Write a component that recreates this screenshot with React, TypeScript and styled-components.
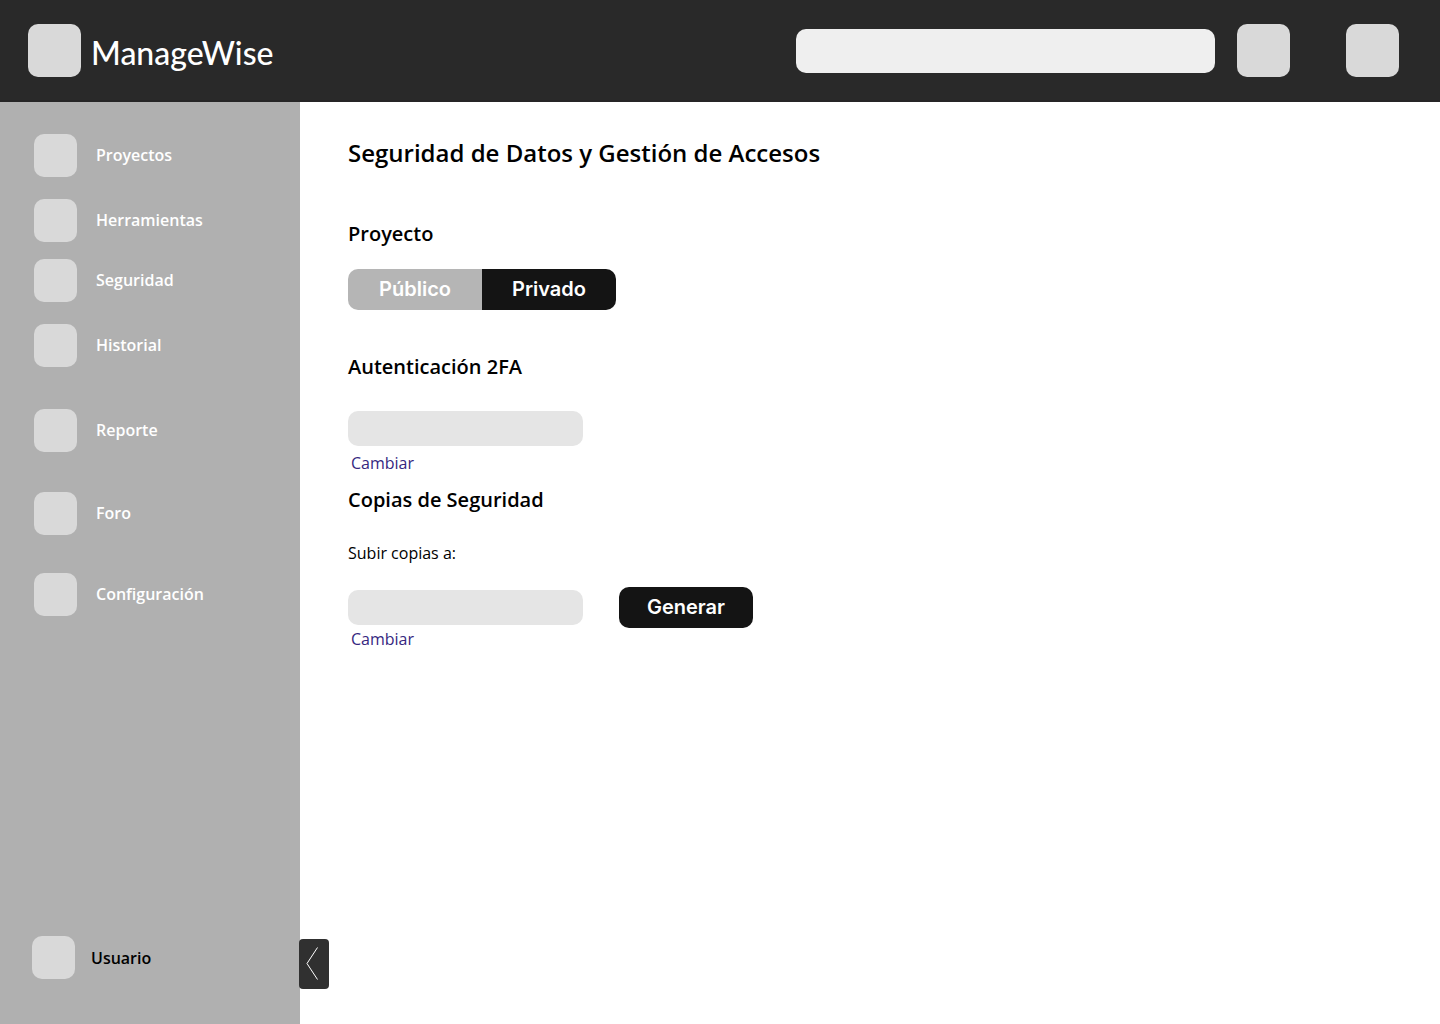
import React from "react";
import styled, { createGlobalStyle } from "styled-components";

const GlobalStyle = createGlobalStyle`
  *, *::before, *::after { box-sizing: border-box; }
  body {
    margin: 0;
    background: #ffffff;
    color: #000000;
    font-family: "Open Sans", "Noto Sans", sans-serif;
    font-size: 16px;
    line-height: 24px;
  }
  button, input { font: inherit; }
`;

const Page = styled.div`
  display: flex;
  flex-direction: column;
  min-height: 100vh;
`;

const Header = styled.header`
  display: flex;
  align-items: center;
  padding: 24px 41px 23px 28px;
  background: #292929;
  border-bottom: 2px solid #262526;
`;

const Tile = styled.span<{ $size: number }>`
  display: block;
  flex: none;
  width: ${(p) => p.$size}px;
  height: ${(p) => p.$size}px;
  border-radius: 10px;
  background: #d9d9d9;
`;

const Brand = styled.a`
  display: flex;
  align-items: center;
  gap: 10px;
  color: #ffffff;
  text-decoration: none;
`;

const BrandName = styled.span`
  padding-top: 4px;
  font-family: Lato, sans-serif;
  font-size: 32px;
  font-weight: 500;
  line-height: 40px;
`;

const Tools = styled.div`
  display: flex;
  flex: 1;
  align-items: center;
  justify-content: flex-end;
`;

const Search = styled.input`
  width: 419px;
  height: 44px;
  margin-right: 22px;
  padding: 0 16px;
  border: 0;
  border-radius: 10px;
  background: #efefef;
`;

const TileButton = styled.button`
  padding: 0;
  border: 0;
  background: none;
  cursor: pointer;

  & + & { margin-left: 56px; }
`;

const Body = styled.div`
  display: flex;
  flex: 1;
`;

const Sidebar = styled.aside`
  position: relative;
  display: flex;
  flex: none;
  flex-direction: column;
  justify-content: space-between;
  width: 300px;
  padding: 32px 32px 45px;
  background: #b0b0b0;
`;

const NavList = styled.ul`
  margin: 0;
  padding: 0 0 0 2px;
  list-style: none;
`;

const NavItem = styled.li<{ $space: number }>`
  margin-top: ${(p) => p.$space}px;
`;

const NavLink = styled.a`
  display: flex;
  align-items: center;
  gap: 19px;
  color: #ffffff;
  font-weight: 600;
  text-decoration: none;
`;

const NavLabel = styled.span`
  padding-bottom: 2px;
`;

const UserLink = styled(NavLink)`
  gap: 16px;
  color: #000000;
`;

const CollapseButton = styled.button`
  position: absolute;
  right: -29px;
  bottom: 35px;
  display: flex;
  align-items: center;
  width: 30px;
  height: 50px;
  padding: 0 7px;
  border: 0;
  border-radius: 4px;
  background: #303030;
  cursor: pointer;
`;

const Main = styled.main`
  flex: 1;
  min-width: 0;
  padding: 35px 48px;
`;

const Title = styled.h1`
  margin: 0 0 51px;
  font-size: 24px;
  font-weight: 600;
  line-height: 32px;
`;

const Section = styled.section<{ $after: number }>`
  margin-bottom: ${(p) => p.$after}px;
`;

const SectionTitle = styled.h2<{ $after: number }>`
  margin: 0 0 ${(p) => p.$after}px;
  font-size: 20px;
  font-weight: 600;
  line-height: 28px;
`;

const Toggle = styled.div`
  display: inline-flex;
  overflow: hidden;
  border-radius: 10px;
  vertical-align: top;
`;

const Action = styled.button<{ $muted?: boolean; $rounded?: boolean }>`
  width: 134px;
  height: 41px;
  padding: 0 0 1px;
  border: 0;
  border-radius: ${(p) => (p.$rounded ? 10 : 0)}px;
  background: ${(p) => (p.$muted ? "#b5b5b5" : "#141414")};
  color: #ffffff;
  font-family: Inter, sans-serif;
  font-size: 20px;
  font-weight: 600;
  cursor: pointer;
`;

const Field = styled.input`
  display: block;
  width: 235px;
  height: 35px;
  padding: 0 12px;
  border: 0;
  border-radius: 10px;
  background: #e5e5e5;
`;

const FieldRow = styled.div`
  display: flex;
  align-items: center;
  gap: 36px;
`;

const FieldLabel = styled.label`
  display: block;
  margin-bottom: 22px;
`;

const ChangeLink = styled.a<{ $before?: number }>`
  display: block;
  width: fit-content;
  margin-top: ${(p) => p.$before ?? 0}px;
  padding-left: 3px;
  color: #36277f;
  line-height: 22px;
  text-decoration: none;
`;

const navigation = [
  { label: "Proyectos", space: 0 },
  { label: "Herramientas", space: 22 },
  { label: "Seguridad", space: 17 },
  { label: "Historial", space: 22 },
  { label: "Reporte", space: 42 },
  { label: "Foro", space: 40 },
  { label: "Configuración", space: 38 },
];

export default function App() {
  const [isPrivate, setPrivate] = React.useState(true);

  return (
    <>
      <GlobalStyle />
      <Page>
        <Header>
          <Brand href="#">
            <Tile $size={53} />
            <BrandName>ManageWise</BrandName>
          </Brand>
          <Tools>
            <Search type="search" aria-label="Buscar" />
            <TileButton type="button" aria-label="Notificaciones">
              <Tile $size={53} />
            </TileButton>
            <TileButton type="button" aria-label="Perfil">
              <Tile $size={53} />
            </TileButton>
          </Tools>
        </Header>
        <Body>
          <Sidebar>
            <nav>
              <NavList>
                {navigation.map(({ label, space }) => (
                  <NavItem key={label} $space={space}>
                    <NavLink href="#">
                      <Tile $size={43} />
                      <NavLabel>{label}</NavLabel>
                    </NavLink>
                  </NavItem>
                ))}
              </NavList>
            </nav>
            <UserLink href="#">
              <Tile $size={43} />
              Usuario
            </UserLink>
            <CollapseButton type="button" aria-label="Contraer menú">
              <svg width="13" height="34" viewBox="0 0 13 34" fill="none" stroke="#ffffff">
                <path d="M11.5 0.5 L1 16.5 L11.5 32.5" />
              </svg>
            </CollapseButton>
          </Sidebar>
          <Main>
            <Title>Seguridad de Datos y Gestión de Accesos</Title>
            <Section $after={43}>
              <SectionTitle $after={21}>Proyecto</SectionTitle>
              <Toggle>
                <Action
                  type="button"
                  $muted={isPrivate}
                  aria-pressed={!isPrivate}
                  onClick={() => setPrivate(false)}
                >
                  Público
                </Action>
                <Action
                  type="button"
                  $muted={!isPrivate}
                  aria-pressed={isPrivate}
                  onClick={() => setPrivate(true)}
                >
                  Privado
                </Action>
              </Toggle>
            </Section>
            <Section $after={12}>
              <SectionTitle $after={30}>Autenticación 2FA</SectionTitle>
              <Field type="text" aria-label="Autenticación 2FA" />
              <ChangeLink href="#" $before={6}>Cambiar</ChangeLink>
            </Section>
            <Section $after={0}>
              <SectionTitle $after={27}>Copias de Seguridad</SectionTitle>
              <FieldLabel htmlFor="backup-target">Subir copias a:</FieldLabel>
              <FieldRow>
                <Field id="backup-target" type="text" />
                <Action type="button" $rounded>Generar</Action>
              </FieldRow>
              <ChangeLink href="#">Cambiar</ChangeLink>
            </Section>
          </Main>
        </Body>
      </Page>
    </>
  );
}
